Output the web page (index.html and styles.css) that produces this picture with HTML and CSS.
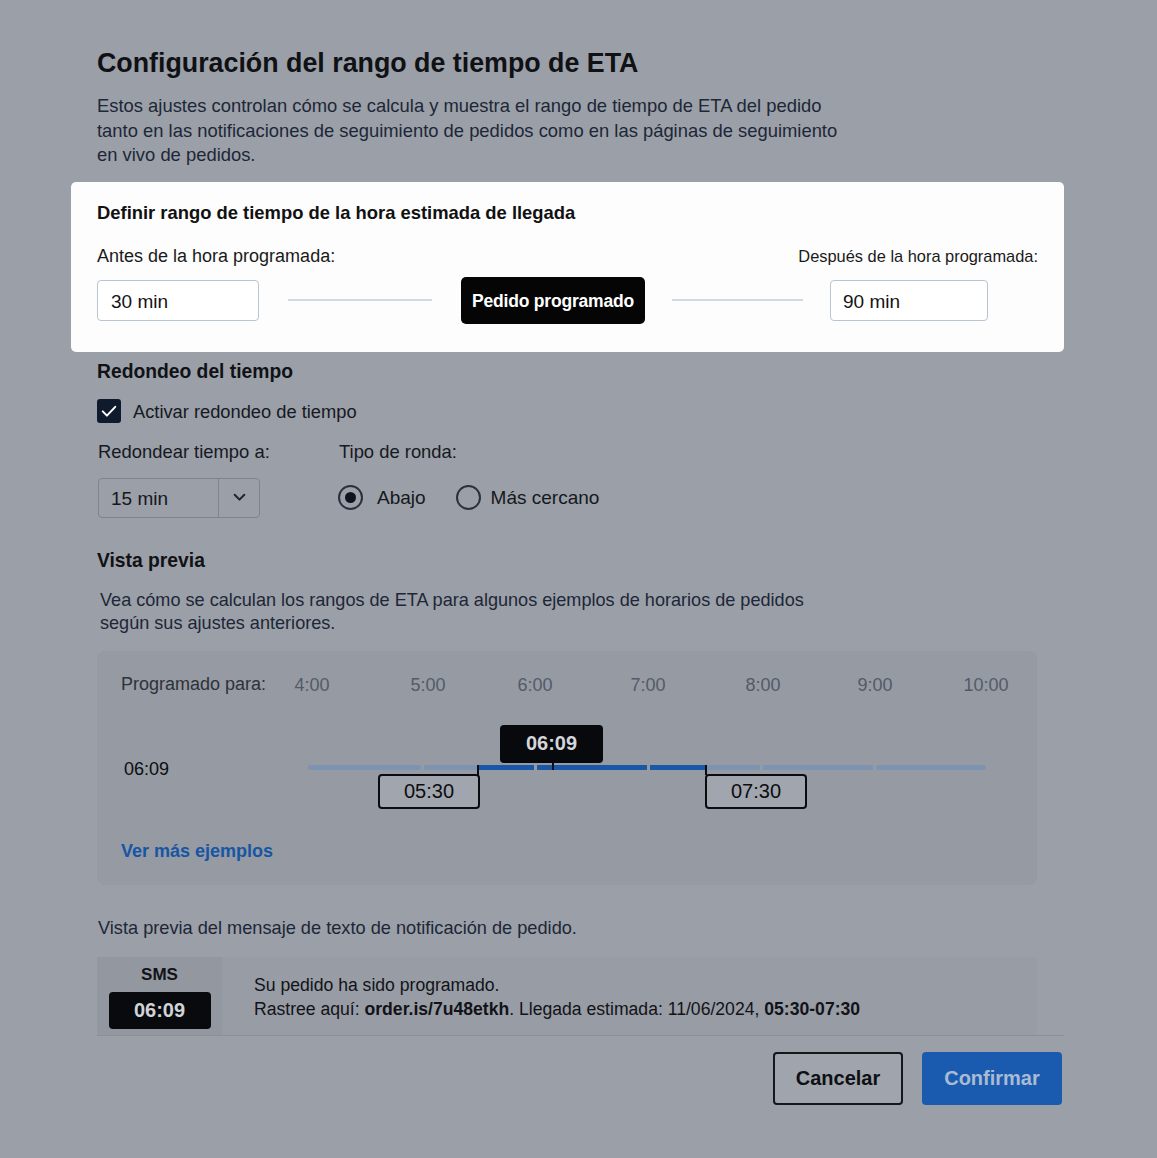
FILE: index.html
```html
<!DOCTYPE html>
<html lang="es">
<head>
<meta charset="utf-8">
<title>Configuración del rango de tiempo de ETA</title>
<link rel="stylesheet" href="styles.css">
</head>
<body>
<main class="page">
  <h1 class="title">Configuración del rango de tiempo de ETA</h1>
  <p class="intro">Estos ajustes controlan cómo se calcula y muestra el rango de tiempo de ETA del pedido<br>tanto en las notificaciones de seguimiento de pedidos como en las páginas de seguimiento<br>en vivo de pedidos.</p>

  <section class="spotlight">
    <h2 class="spot-title">Definir rango de tiempo de la hora estimada de llegada</h2>
    <div class="spot-labels">
      <span class="lbl-before">Antes de la hora programada:</span>
      <span class="lbl-after">Después de la hora programada:</span>
    </div>
    <div class="spot-controls">
      <div class="field field-before">30 min</div>
      <span class="connector c1"></span>
      <div class="scheduled-btn">Pedido programado</div>
      <span class="connector c2"></span>
      <div class="field field-after">90 min</div>
    </div>
  </section>

  <h3 class="section-title st-round">Redondeo del tiempo</h3>
  <label class="check-row">
    <span class="checkbox">
      <svg viewBox="0 0 24 24" width="20" height="20"><path d="M4.5 12.5l5 5L19.5 7" fill="none" stroke="#fff" stroke-width="2.4" stroke-linecap="round" stroke-linejoin="round"/></svg>
    </span>
    <span>Activar redondeo de tiempo</span>
  </label>

  <div class="round-grid">
    <div class="rg-label">Redondear tiempo a:</div>
    <div class="rg-label rg-type">Tipo de ronda:</div>
    <div class="select">
      <span class="select-value">15 min</span>
      <span class="select-arrow">
        <svg viewBox="0 0 14 14" width="15" height="15"><path d="M2.5 4.5l4.5 4.5 4.5-4.5" fill="none" stroke="#1c2636" stroke-width="1.9" stroke-linecap="round" stroke-linejoin="round"/></svg>
      </span>
    </div>
    <div class="radios">
      <span class="radio checked"></span><span class="radio-label">Abajo</span>
      <span class="radio"></span><span class="radio-label">Más cercano</span>
    </div>
  </div>

  <h3 class="section-title st-preview">Vista previa</h3>
  <p class="preview-desc">Vea cómo se calculan los rangos de ETA para algunos ejemplos de horarios de pedidos<br>según sus ajustes anteriores.</p>

  <section class="preview-panel">
    <div class="tl-row tl-head">
      <span class="tl-caption">Programado para:</span>
      <div class="hours">
        <span class="hour" style="left:4px">4:00</span>
        <span class="hour" style="left:120px">5:00</span>
        <span class="hour" style="left:227px">6:00</span>
        <span class="hour" style="left:340px">7:00</span>
        <span class="hour" style="left:455px">8:00</span>
        <span class="hour" style="left:567px">9:00</span>
        <span class="hour" style="left:678px">10:00</span>
      </div>
    </div>
    <div class="tl-row tl-body">
      <span class="tl-time">06:09</span>
      <div class="track">
        <svg class="bar" width="678" height="5" viewBox="0 0 678 5">
          <rect x="0" y="0" width="113" height="5" rx="2.5" fill="#7d93b2"/>
          <rect x="116" y="0" width="110" height="5" fill="#7d93b2"/>
          <rect x="229" y="0" width="110" height="5" fill="#7d93b2"/>
          <rect x="342" y="0" width="110" height="5" fill="#7d93b2"/>
          <rect x="455" y="0" width="110" height="5" fill="#7d93b2"/>
          <rect x="568" y="0" width="110" height="5" rx="2.5" fill="#7d93b2"/>
          <rect x="170" y="0" width="56" height="5" fill="#1a57a6"/>
          <rect x="229" y="0" width="110" height="5" fill="#1a57a6"/>
          <rect x="342" y="0" width="55" height="5" fill="#1a57a6"/>
        </svg>
        <span class="mark-now" style="left:192px">06:09</span>
        <span class="tick tick-now" style="left:244px"></span>
        <span class="tick tick-start" style="left:169px"></span>
        <span class="mark-box" style="left:70px">05:30</span>
        <span class="tick tick-end" style="left:397px"></span>
        <span class="mark-box" style="left:397px">07:30</span>
      </div>
    </div>
    <a class="more-link" href="#">Ver más ejemplos</a>
  </section>

  <p class="sms-caption">Vista previa del mensaje de texto de notificación de pedido.</p>
  <section class="sms-panel">
    <div class="sms-side">
      <span class="sms-tag">SMS</span>
      <span class="sms-time">06:09</span>
    </div>
    <div class="sms-text">
      <div>Su pedido ha sido programado.</div>
      <div>Rastree aquí: <b>order.is/7u48etkh</b>. Llegada estimada: 11/06/2024, <b>05:30-07:30</b></div>
    </div>
  </section>
  <div class="separator"></div>

  <footer class="actions">
    <button class="btn btn-cancel">Cancelar</button>
    <button class="btn btn-confirm">Confirmar</button>
  </footer>
</main>
</body>
</html>
```

FILE: styles.css
```css
* { box-sizing: border-box; }

html, body {
  margin: 0;
  padding: 0;
  background: #9b9fa7;
}

body {
  font-family: "Liberation Sans", Arial, sans-serif;
  color: #14171c;
  height: 1158px;
  overflow: hidden;
}

.page {
  width: 1064px;
  padding: 47px 0 0 97px;
}

.title {
  margin: 0;
  font-size: 26.8px;
  line-height: 32px;
  font-weight: 700;
  color: #0f1114;
}

.intro {
  margin: 15px 0 0;
  font-size: 18.4px;
  line-height: 24.5px;
  color: #1d2738;
  white-space: nowrap;
}

/* Highlighted section */
.spotlight {
  margin: 14px 0 0 -26px;
  width: 993px;
  background: #fdfdfd;
  border-radius: 5px;
  padding: 20px 26px 28px;
}

.spot-title {
  margin: 0;
  font-size: 18.4px;
  line-height: 22px;
  font-weight: 700;
  color: #111;
}

.spot-labels {
  margin-top: 21px;
  display: flex;
  justify-content: space-between;
  line-height: 22px;
  color: #1a1a1a;
}
.lbl-before { font-size: 18px; }
.lbl-after { font-size: 16.4px; }

.spot-controls {
  margin-top: 10px;
  display: flex;
  align-items: center;
  height: 47px;
}

.field {
  height: 41px;
  border: 1.5px solid #b9c4d4;
  border-radius: 4px;
  padding: 4px 13px 0;
  display: flex;
  align-items: center;
  font-size: 19px;
  color: #141414;
  background: #fff;
}

.field-before { width: 162px; }
.field-after { width: 158px; padding-left: 12px; }

.connector {
  height: 2px;
  background: #d3d9e3;
}
.c1 { width: 144px; margin: 0 29px 0 29px; }
.c2 { width: 131px; margin: 0 27px 0 27px; }

.scheduled-btn {
  width: 184px;
  height: 47px;
  background: #050505;
  border-radius: 5px;
  color: #fff;
  font-weight: 700;
  font-size: 17.5px;
  letter-spacing: -0.2px;
  display: flex;
  align-items: center;
  justify-content: center;
  padding-top: 2px;
}

/* Rounding */
.section-title {
  margin: 0;
  font-size: 19.3px;
  line-height: 24px;
  font-weight: 700;
  color: #101216;
}
.st-round { margin-top: 8px; }
.st-preview { margin-top: 31px; }

.check-row {
  margin-top: 15px;
  display: flex;
  align-items: center;
  gap: 12px;
  font-size: 18.3px;
  color: #16191f;
  height: 24px;
}
.check-row span:last-child { padding-top: 3px; }

.checkbox {
  width: 24px;
  height: 24px;
  background: #0f1a2c;
  border-radius: 3px;
  display: flex;
  align-items: center;
  justify-content: center;
}

.round-grid {
  margin-top: 18px;
  display: grid;
  grid-template-columns: 241px auto;
  grid-template-rows: 22px 40px;
  row-gap: 15px;
}

.rg-label {
  font-size: 18.4px;
  line-height: 22px;
  color: #16191f;
  padding-left: 1px;
}

.select {
  margin-left: 1px;
  width: 162px;
  height: 40px;
  border: 1.5px solid #7e848f;
  border-radius: 4px;
  display: flex;
  align-items: stretch;
}

.select-value {
  width: 120px;
  border-right: 1.5px solid #7e848f;
  display: flex;
  align-items: center;
  padding: 2px 0 0 12px;
  font-size: 19px;
  color: #15181d;
}

.select-arrow {
  flex: 1;
  display: flex;
  align-items: center;
  justify-content: center;
}

.radios {
  display: flex;
  align-items: center;
  font-size: 19px;
  color: #15181d;
}

.radio {
  width: 25px;
  height: 25px;
  border: 2px solid #2a313c;
  border-radius: 50%;
  display: flex;
  align-items: center;
  justify-content: center;
}
.radio.checked::after {
  content: "";
  width: 11px;
  height: 11px;
  border-radius: 50%;
  background: #0f1520;
}
.radio-label { margin: 0 30px 0 14px; }
.radio-label:last-child { margin: 0 0 0 10px; }

.preview-desc {
  margin: 16px 0 0 3px;
  font-size: 18.1px;
  line-height: 23px;
  color: #1d2738;
}

/* Preview panel */
.preview-panel {
  margin-top: 16px;
  width: 940px;
  background: #969aa2;
  border-radius: 8px;
  padding: 23px 24px 23px;
}

.tl-row {
  display: grid;
  grid-template-columns: 187px 678px;
  align-items: center;
}

.tl-head { height: 22px; }

.tl-caption {
  font-size: 18px;
  color: #2e3239;
}

.hours {
  position: relative;
  height: 22px;
}

.hour {
  position: absolute;
  top: 0;
  transform: translateX(-50%);
  font-size: 18px;
  line-height: 22px;
  color: #535b69;
  white-space: nowrap;
}

.tl-body {
  margin-top: 26px;
  height: 90px;
}

.tl-time {
  font-size: 18px;
  color: #0c0d10;
  padding: 6px 0 0 3px;
}

.track {
  position: relative;
  height: 90px;
}

.bar {
  position: absolute;
  left: 0;
  top: 43px;
  display: block;
}

.mark-now {
  position: absolute;
  top: 3px;
  width: 103px;
  height: 38px;
  background: #07090d;
  border-radius: 4px;
  color: #d3d6db;
  font-weight: 700;
  font-size: 20px;
  display: flex;
  align-items: center;
  justify-content: center;
}

.mark-box {
  position: absolute;
  top: 52px;
  width: 102px;
  height: 35px;
  border: 2px solid #0b0c0f;
  border-radius: 4px;
  background: #a1a5ad;
  color: #0c0d10;
  font-size: 20px;
  display: flex;
  align-items: center;
  justify-content: center;
}

.tick {
  position: absolute;
  width: 2px;
  background: #0b0c0f;
}
.tick-now { top: 41px; height: 7px; }
.tick-start, .tick-end { top: 43px; height: 10px; }

.more-link {
  display: block;
  margin-top: 28px;
  font-size: 18px;
  line-height: 22px;
  font-weight: 700;
  color: #1656a4;
  text-decoration: none;
}

/* SMS */
.sms-caption {
  margin: 32px 0 0 1px;
  font-size: 18.2px;
  line-height: 22px;
  color: #1d2738;
}

.sms-panel {
  margin-top: 18px;
  width: 940px;
  height: 78px;
  background: #989ca4;
  display: flex;
}

.sms-side {
  width: 125px;
  background: #9397a0;
  display: flex;
  flex-direction: column;
  align-items: center;
  padding-top: 8px;
}

.sms-tag {
  font-weight: 700;
  font-size: 17px;
  line-height: 20px;
  color: #111318;
}

.sms-time {
  margin-top: 7px;
  width: 102px;
  height: 37px;
  background: #080a0e;
  border-radius: 4px;
  color: #d0d3d8;
  font-weight: 700;
  font-size: 20px;
  display: flex;
  align-items: center;
  justify-content: center;
}

.sms-text {
  padding: 16px 0 0 32px;
  font-size: 17.6px;
  line-height: 24px;
  color: #111318;
}

.separator {
  width: 967px;
  height: 1px;
  background: #8b8f97;
}

.actions {
  margin-top: 16px;
  width: 965px;
  display: flex;
  justify-content: flex-end;
  gap: 19px;
}

.btn {
  height: 53px;
  border-radius: 4px;
  font-family: "Liberation Sans", Arial, sans-serif;
  font-weight: 700;
  font-size: 20px;
  padding: 0;
}

.btn-cancel {
  width: 130px;
  background: #a0a4ac;
  border: 2px solid #15171b;
  color: #0e1014;
}

.btn-confirm {
  width: 140px;
  background: #1a5bb0;
  border: none;
  color: #a9bbd3;
}
```
